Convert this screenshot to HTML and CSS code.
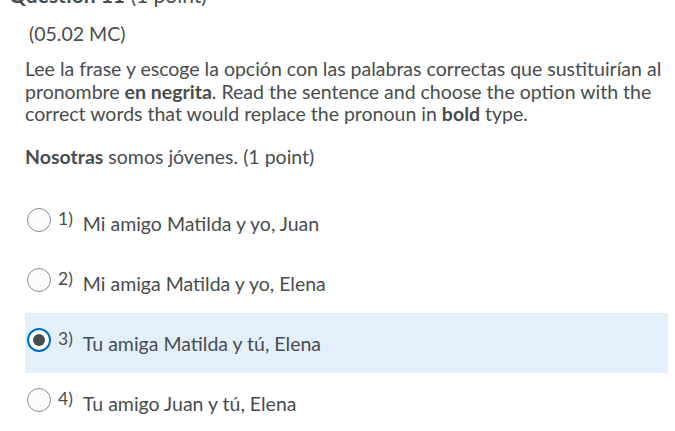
FILE: index.html
```html
<!DOCTYPE html>
<html lang="es">
<head>
<meta charset="utf-8">
<link rel="stylesheet" href="styles.css">
</head>
<body>
<div class="page">
  <div class="qtitle"><b>Question 11</b> (1 point)</div>
  <div class="code">(05.02 MC)</div>
  <p class="prompt">Lee la frase y escoge la opción con las palabras correctas que sustituirían al pronombre <b>en negrita</b>. Read the sentence and choose the option with the correct words that would replace the pronoun in <b>bold</b> type.</p>
  <p class="sentence"><b>Nosotras</b> somos jóvenes. (1 point)</p>
  <div class="options">
    <div class="opt"><span class="radio"></span><span class="num">1)</span><span class="label">Mi amigo Matilda y yo, Juan</span></div>
    <div class="opt"><span class="radio"></span><span class="num">2)</span><span class="label">Mi amiga Matilda y yo, Elena</span></div>
    <div class="opt selected"><span class="radio checked"></span><span class="num">3)</span><span class="label">Tu amiga Matilda y tú, Elena</span></div>
    <div class="opt"><span class="radio"></span><span class="num">4)</span><span class="label">Tu amigo Juan y tú, Elena</span></div>
  </div>
</div>
</body>
</html>
```
FILE: styles.css
```css
html, body {
  margin: 0;
  padding: 0;
  background: #ffffff;
}
body {
  font-family: Lato, "Open Sans", sans-serif;
  color: #494c4e;
  font-size: 19.5px;
  overflow: hidden;
}
.page {
  padding: 0 7px 0 25px;
}
.qtitle {
  font-size: 21px;
  line-height: 24px;
  margin-top: -17px;
  margin-left: -16px;
}
.qtitle b {
  font-weight: 700;
}
.code {
  margin-top: 15px;
  padding-left: 4px;
  line-height: 24px;
}
.prompt {
  margin: 12px 0 0;
  line-height: 22.5px;
}
.prompt b, .sentence b {
  font-weight: 700;
}
.sentence {
  margin: 19px 0 0;
  line-height: 24px;
}
.options {
  margin-top: 24px;
}
.opt {
  height: 60px;
  display: flex;
  align-items: center;
}
.opt.selected {
  background: #e3f0fc;
}
.radio {
  box-sizing: border-box;
  width: 24px;
  height: 24px;
  border-radius: 50%;
  border: 1px solid #868c8f;
  background: #fafbfc;
  margin-left: 2px;
  margin-top: -5px;
  flex: none;
  position: relative;
}
.radio.checked {
  border: 2px solid #006fbf;
  background: #ffffff;
}
.radio.checked::after {
  content: "";
  position: absolute;
  left: 4px;
  top: 4px;
  width: 12px;
  height: 12px;
  border-radius: 50%;
  background: #494c4e;
}
.num {
  font-size: 17.5px;
  margin-left: 7px;
  margin-top: -8px;
}
.label {
  margin-left: 10px;
  margin-top: 2px;
}
```
